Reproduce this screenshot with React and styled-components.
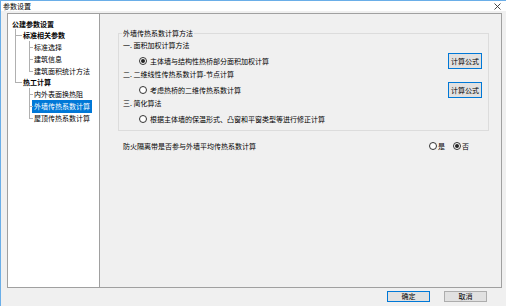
import React from 'react';
import styled, { createGlobalStyle } from 'styled-components';

const GlobalStyle = createGlobalStyle`
  html, body { margin: 0; padding: 0; }
  body {
    width: 506px;
    height: 306px;
    overflow: hidden;
    background: #f0f0f0;
    font-family: "Noto Sans CJK SC", "Noto Sans", sans-serif;
    font-size: 7px;
    color: #000;
  }
  * { box-sizing: border-box; }
  ul { list-style: none; margin: 0; padding: 0; }
`;

const Window = styled.div`
  width: 506px;
  height: 306px;
  border-top: 1px solid #6aaee8;
  border-left: 1px solid #6aaee8;
  display: flex;
  flex-direction: column;
  background: #f0f0f0;
`;

const TitleBar = styled.div`
  height: 10px;
  background: #fff;
  display: flex;
  align-items: center;
  justify-content: space-between;
  padding: 0 5px 0 2px;
  line-height: 10px;
`;

const Body = styled.div`
  padding: 2px 4px 0 6px;
`;

const Frame = styled.div`
  width: 495px;
  height: 275px;
  border: 1px solid #a0a0a0;
  display: flex;
`;

const Tree = styled.div`
  width: 92px;
  background: #fff;
  border-right: 1px solid #a0a0a0;
  padding: 3.5px 0 0 4px;
`;

const Label = styled.div`
  height: 11.75px;
  line-height: 11.75px;
  white-space: nowrap;
  font-weight: ${p => (p.$bold ? 700 : 400)};
  span {
    display: inline-block;
    padding: 0 2px;
    margin-left: -2px;
    line-height: 13px;
    background: ${p => (p.$selected ? '#0078d7' : 'transparent')};
    color: ${p => (p.$selected ? '#fff' : '#000')};
  }
`;

const Children = styled.ul`
  padding-left: 11px;
`;

const Node = styled.li`
  position: relative;
  &::before {
    content: '';
    position: absolute;
    left: ${p => -p.$line}px;
    top: 0;
    width: ${p => p.$line - 2}px;
    height: 6px;
    border-left: 1px solid #b0b0b0;
    border-bottom: 1px solid #b0b0b0;
  }
  &::after {
    content: '';
    position: absolute;
    left: ${p => -p.$line}px;
    top: 6px;
    bottom: 0;
    border-left: 1px solid #b0b0b0;
    display: ${p => (p.$last ? 'none' : 'block')};
  }
`;

const Content = styled.div`
  flex: 1;
  padding: 19px 12px 0 18px;
`;

const Group = styled.div`
  position: relative;
  border: 1px solid #dcdcdc;
  padding: 6px 6px 3px 4px;
`;

const Legend = styled.div`
  position: absolute;
  top: -6px;
  left: 3px;
  padding: 0 1px;
  line-height: 10px;
  background: #f0f0f0;
`;

const Heading = styled.div`
  height: 10px;
  line-height: 10px;
  margin-bottom: 3px;
`;

const RadioRow = styled.div`
  height: 16px;
  display: flex;
  align-items: center;
  justify-content: space-between;
  padding-left: 16px;
`;

const Option = styled.label`
  display: flex;
  align-items: center;
  gap: ${p => p.$gap ?? 3}px;
  line-height: 10px;
`;

const Circle = styled.span`
  width: 8px;
  height: 8px;
  border-radius: 50%;
  border: 1px solid #333;
  background: #fff;
  display: flex;
  align-items: center;
  justify-content: center;
  &::after {
    content: '';
    width: 4px;
    height: 4px;
    border-radius: 50%;
    background: #222;
    display: ${p => (p.$checked ? 'block' : 'none')};
  }
`;

const Button = styled.button`
  width: ${p => p.$w}px;
  height: ${p => p.$h}px;
  padding: 0;
  font: inherit;
  line-height: 1;
  color: #000;
  background: #e1e1e1;
  border: 1px solid ${p => (p.$focus ? '#0078d7' : '#adadad')};
`;

const FireRow = styled.div`
  margin-top: 9px;
  height: 12px;
  display: flex;
  align-items: center;
  justify-content: space-between;
  padding: 0 20px 0 5px;
  line-height: 10px;
`;

const Choices = styled.div`
  display: flex;
  gap: 8px;
`;

const Footer = styled.div`
  display: flex;
  justify-content: flex-end;
  gap: 14px;
  padding: 3px 19px 0 0;
`;

const Radio = ({ checked, children, gap }) => (
  <Option $gap={gap}>
    <Circle $checked={checked} />
    <span>{children}</span>
  </Option>
);

const CloseIcon = () => (
  <svg width="7" height="7" viewBox="0 0 7 7">
    <path d="M0.5 0.5 L6.5 6.5 M6.5 0.5 L0.5 6.5" stroke="#333" strokeWidth="0.9" />
  </svg>
);

const App = () => (
  <Window>
    <GlobalStyle />
    <TitleBar>
      <span>参数设置</span>
      <CloseIcon />
    </TitleBar>
    <Body>
      <Frame>
        <Tree>
          <ul>
            <li>
              <Label $bold><span>公建参数设置</span></Label>
              <Children>
                <Node $line={8}>
                  <Label $bold><span>标准相关参数</span></Label>
                  <Children>
                    <Node $line={5}><Label><span>标准选择</span></Label></Node>
                    <Node $line={5}><Label><span>建筑信息</span></Label></Node>
                    <Node $line={5} $last><Label><span>建筑面积统计方法</span></Label></Node>
                  </Children>
                </Node>
                <Node $line={8} $last>
                  <Label $bold><span>热工计算</span></Label>
                  <Children>
                    <Node $line={5}><Label><span>内外表面换热阻</span></Label></Node>
                    <Node $line={5}><Label $selected><span>外墙传热系数计算</span></Label></Node>
                    <Node $line={5} $last><Label><span>屋顶传热系数计算</span></Label></Node>
                  </Children>
                </Node>
              </Children>
            </li>
          </ul>
        </Tree>
        <Content>
          <Group>
            <Legend>外墙传热系数计算方法</Legend>
            <Heading>一. 面积加权计算方法</Heading>
            <RadioRow>
              <Radio checked>主体墙与结构性热桥部分面积加权计算</Radio>
              <Button $w={34} $h={16} $focus>计算公式</Button>
            </RadioRow>
            <Heading>二. 二维线性传热系数计算-节点计算</Heading>
            <RadioRow>
              <Radio>考虑热桥的二维传热系数计算</Radio>
              <Button $w={34} $h={16} $focus>计算公式</Button>
            </RadioRow>
            <Heading>三. 简化算法</Heading>
            <RadioRow>
              <Radio>根据主体墙的保温形式、凸窗和平窗类型等进行修正计算</Radio>
            </RadioRow>
          </Group>
          <FireRow>
            <span>防火隔离带是否参与外墙平均传热系数计算</span>
            <Choices>
              <Radio gap={1}>是</Radio>
              <Radio checked gap={1}>否</Radio>
            </Choices>
          </FireRow>
        </Content>
      </Frame>
    </Body>
    <Footer>
      <Button $w={43} $h={11} $focus>确定</Button>
      <Button $w={43} $h={11}>取消</Button>
    </Footer>
  </Window>
);

export default App;
